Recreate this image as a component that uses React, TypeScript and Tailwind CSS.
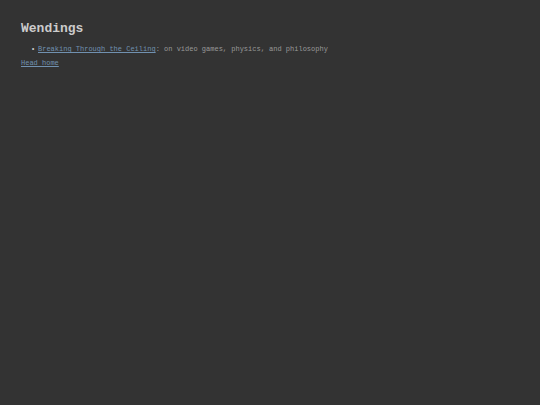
import React from 'react';

interface Entry {
  title: string;
  href: string;
  summary: string;
}

const entries: Entry[] = [
  {
    title: 'Breaking Through the Ceiling',
    href: '#breaking-through-the-ceiling',
    summary: 'on video games, physics, and philosophy',
  },
];

const linkClass = 'text-[#7191b0] underline';

export default function App() {
  return (
    <main className="min-h-screen bg-[#333333] px-[21px] pt-[21px] font-['Liberation_Mono',monospace] text-[7px] leading-2 text-[#999999]">
      <h1 className="text-[13px] leading-4 font-bold text-[#cccccc]">Wendings</h1>
      <ul className="mt-2 pl-[10px]">
        {entries.map((entry) => (
          <li
            key={entry.href}
            className="flex gap-[3px] before:w-1 before:shrink-0 before:text-[#cccccc] before:content-['•']"
          >
            <span>
              <a href={entry.href} className={linkClass}>{entry.title}</a>: {entry.summary}
            </span>
          </li>
        ))}
      </ul>
      <p className="mt-[6px]">
        <a href="#home" className={linkClass}>Head home</a>
      </p>
    </main>
  );
}
